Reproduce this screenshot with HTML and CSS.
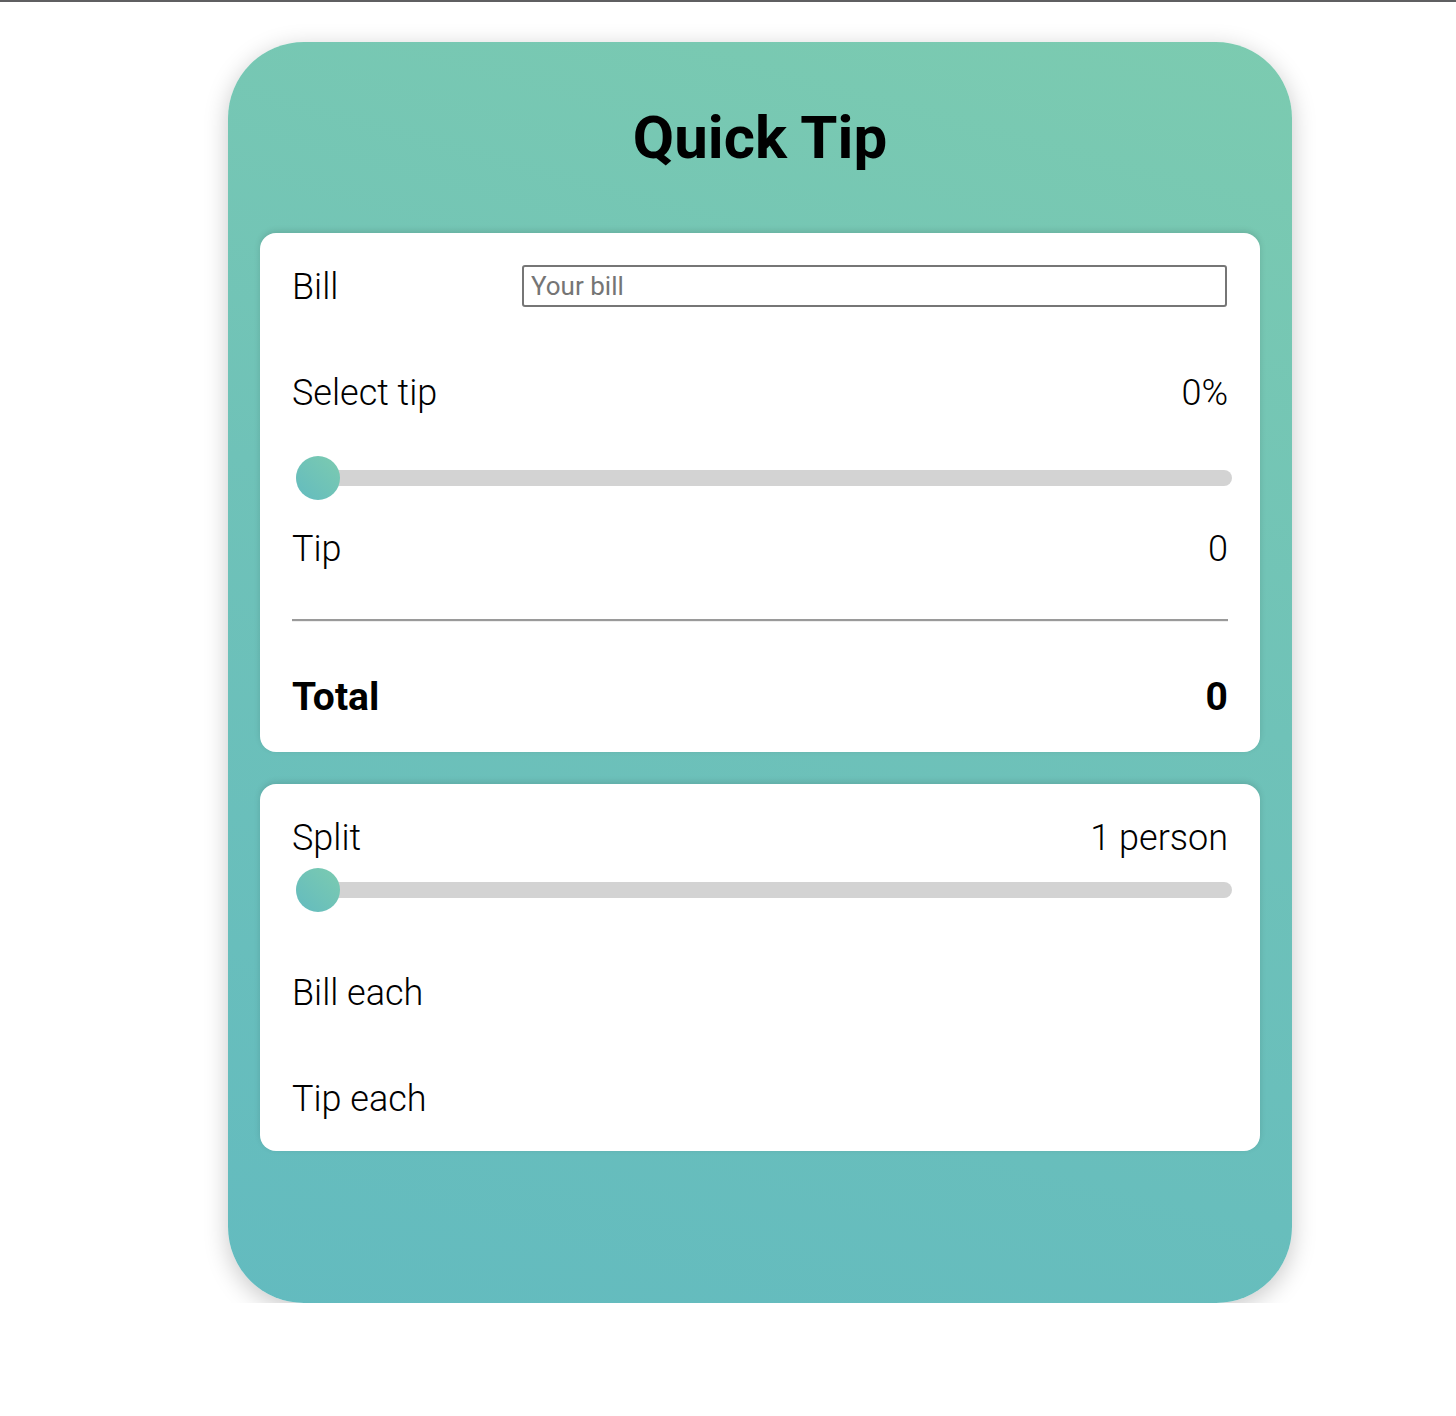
FILE: index.html
```html
<!DOCTYPE html>
<html>
<head>
<meta charset="utf-8">
<title>Quick Tip</title>
<link rel="stylesheet" href="styles.css">
</head>
<body>
<div class="topbar"></div>
<main class="card">
  <h1 class="title">Quick Tip</h1>
  <section class="panel panel-main">
    <div class="row row-bill">
      <span class="label">Bill</span>
      <input class="bill-input" type="text" placeholder="Your bill">
    </div>
    <div class="row row-select">
      <span class="label">Select tip</span>
      <span class="value">0%</span>
    </div>
    <div class="slider slider-tip">
      <div class="track"></div>
      <div class="thumb"></div>
    </div>
    <div class="row row-tip">
      <span class="label">Tip</span>
      <span class="value">0</span>
    </div>
    <hr class="divider">
    <div class="row row-total">
      <span class="label strong">Total</span>
      <span class="value strong">0</span>
    </div>
  </section>
  <section class="panel panel-split">
    <div class="row row-split">
      <span class="label">Split</span>
      <span class="value">1 person</span>
    </div>
    <div class="slider slider-split">
      <div class="track"></div>
      <div class="thumb"></div>
    </div>
    <div class="row row-billeach">
      <span class="label">Bill each</span>
    </div>
    <div class="row row-tipeach">
      <span class="label">Tip each</span>
    </div>
  </section>
</main>
</body>
</html>
```
FILE: styles.css
```css
* { box-sizing: border-box; }
html, body { margin: 0; padding: 0; background: #fff; }
body {
  font-family: Roboto, "Liberation Sans", sans-serif;
  color: #000;
  width: 1456px;
}
.topbar {
  height: 2px;
  background: #5f5f61;
}
.card {
  margin: 40px 0 0 228px;
  width: 1064px;
  height: 1261px;
  border-radius: 76px;
  background: linear-gradient(15deg, #63bbbf 0%, #6fc2b8 55%, #7ccbb0 100%);
  box-shadow: 0 6px 24px rgba(0, 0, 0, 0.22);
  padding: 0 32px;
  display: flex;
  flex-direction: column;
}
.title {
  margin: 0;
  height: 191px;
  display: flex;
  align-items: center;
  justify-content: center;
  font-size: 60px;
  font-weight: 700;
  line-height: 1;
}
.panel {
  background: #fff;
  border-radius: 16px;
  padding: 32px 32px;
  box-shadow: 0 -2px 6px rgba(0, 0, 0, 0.12);
  display: flex;
  flex-direction: column;
}
.panel-main { padding-bottom: 35px; }
.panel-split { margin-top: 32px; padding-bottom: 32px; }
.row {
  height: 42px;
  display: flex;
  align-items: center;
  justify-content: space-between;
}
.label, .value {
  font-size: 36px;
  font-weight: 300;
  line-height: 44px;
  padding-top: 2px;
}
.strong { font-weight: 700; font-size: 39px; }
.row-bill { justify-content: flex-start; }
.row-bill .label { width: 230px; }
.bill-input {
  width: 705px;
  height: 42px;
  border: 2px solid #767676;
  border-radius: 3px;
  padding: 0 7px;
  font-family: Roboto, "Liberation Sans", sans-serif;
  font-size: 26px;
  font-weight: 400;
  color: #000;
  background: #fff;
  outline: none;
}
.bill-input::placeholder { color: #757575; }
.row-select { margin-top: 64px; }
.slider {
  position: relative;
  height: 44px;
  margin-left: 4px;
  width: 936px;
  display: flex;
  align-items: center;
}
.slider-tip { margin-top: 43px; }
.slider-split { margin-top: 10px; }
.track {
  width: 100%;
  height: 16px;
  background: #d3d3d3;
  border-radius: 8px;
}
.thumb {
  position: absolute;
  left: 0;
  top: 0;
  width: 44px;
  height: 44px;
  border-radius: 50%;
  background: linear-gradient(to top right, #63bbbf 0%, #7ccbb0 100%);
}
.row-tip { margin-top: 27px; }
.divider {
  margin: 50px 0 0 0;
  border: 0;
  border-top: 2px solid #9a9a9a;
  border-bottom: 1px solid #eeeeee;
  height: 0;
}
.row-total { margin-top: 53px; }
.row-billeach { margin-top: 59px; }
.row-tipeach { margin-top: 64px; }
```
